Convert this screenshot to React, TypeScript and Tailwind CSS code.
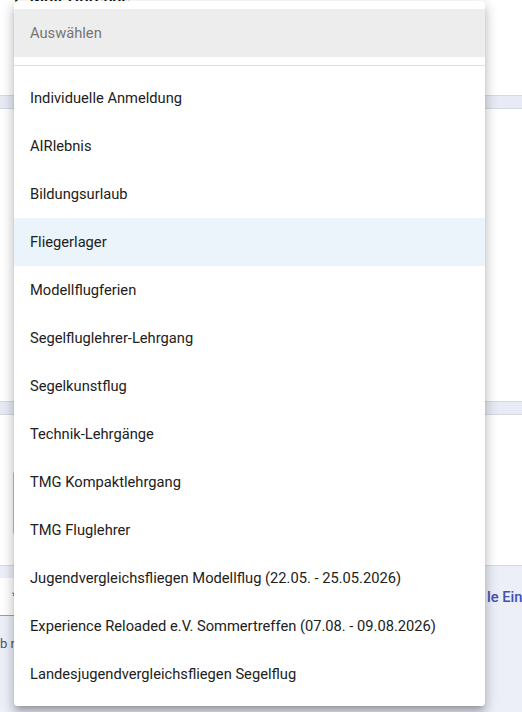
import React from "react"

// Options of the course type select
const courseTypes = [
  "Individuelle Anmeldung",
  "AIRlebnis",
  "Bildungsurlaub",
  "Fliegerlager",
  "Modellflugferien",
  "Segelfluglehrer-Lehrgang",
  "Segelkunstflug",
  "Technik-Lehrgänge",
  "TMG Kompaktlehrgang",
  "TMG Fluglehrer",
  "Jugendvergleichsfliegen Modellflug (22.05. - 25.05.2026)",
  "Experience Reloaded e.V. Sommertreffen (07.08. - 09.08.2026)",
  "Landesjugendvergleichsfliegen Segelflug",
]

function SelectMenu({ highlighted }: { highlighted: string }) {
  return (
    <div className="absolute left-[14px] top-[1px] w-[471px] rounded bg-white py-2 shadow-[0px_5px_5px_-3px_rgba(0,0,0,0.2),0px_8px_10px_1px_rgba(0,0,0,0.14),0px_3px_14px_2px_rgba(0,0,0,0.12)]">
      <div className="flex h-12 items-center bg-[#ededed] px-4 text-[14.7px] text-[#757575]">Auswählen</div>
      <div className="my-2 h-px bg-[#e0e0e0]" />
      {courseTypes.map((type) => (
        <div
          key={type}
          className={
            "flex h-12 items-center whitespace-nowrap px-4 text-[14.7px] text-[#212121] " +
            (type === highlighted ? "bg-[#ebf3fb]" : "bg-white")
          }
        >
          {type}
        </div>
      ))}
    </div>
  )
}

export default function App() {
  return (
    <div className="relative h-[712px] w-[522px] overflow-hidden bg-white font-['Roboto',sans-serif]">
      {/* form underneath the open select */}
      <div className="flex flex-col">
        <div className="-mt-[12px] h-[107px] px-[14px] text-[17px] font-medium leading-[18px] text-[#111]">
          E-Mail-Adresse
        </div>
        <div className="h-[14px] border-y border-[#d6d8e2] bg-[#e8eaf6]" />
        <div className="h-[292px]" />
        <div className="h-[14px] border-y border-[#d6d8e2] bg-[#e8eaf6]" />
        <div className="h-[150px] pt-[55px]">
          <div className="ml-[13px] h-[66px] w-[460px] rounded-sm border border-[#c4c4c4]" />
        </div>
        <div className="h-[148px] border-t border-[#d6d8e2] bg-[#eceef8]">
          <div className="mt-[12px] flex items-center">
            <div className="relative h-[38px] w-[470px] shrink-0 border-b border-[#9e9e9e] bg-white">
              <span className="absolute left-[12px] top-[10px] text-xs text-[#d32f2f]">*</span>
            </div>
            <span className="ml-[17px] whitespace-nowrap text-[14.7px] font-medium text-[#3f51b5]">le Einträge</span>
          </div>
          <div className="mt-[18px] whitespace-nowrap text-[13px] text-[#555]">b r</div>
        </div>
      </div>

      <SelectMenu highlighted="Fliegerlager" />
    </div>
  )
}
